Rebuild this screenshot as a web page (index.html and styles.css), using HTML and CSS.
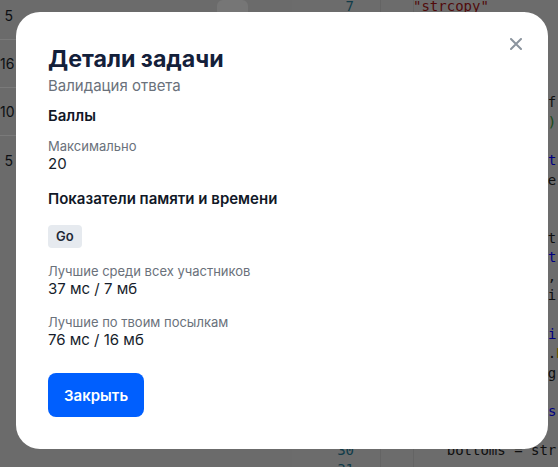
FILE: index.html
```html
<!DOCTYPE html>
<html lang="ru">
<head>
<meta charset="utf-8">
<title>Детали задачи</title>
<link rel="stylesheet" href="styles.css">
</head>
<body>
<div class="page">
  <div class="table">
    <div class="row"><span class="num">5</span><span class="tool"></span></div>
    <div class="row"><span class="num">16</span></div>
    <div class="row"><span class="num">10</span></div>
    <div class="row last"><span class="num">5</span></div>
  </div>
  <div class="editor">
    <div class="gutter">
      <div class="ln">7</div><div class="ln">8</div><div class="ln">9</div><div class="ln">10</div>
      <div class="ln">11</div><div class="ln">12</div><div class="ln">13</div><div class="ln">14</div>
      <div class="ln">15</div><div class="ln">16</div><div class="ln">17</div><div class="ln">18</div>
      <div class="ln">19</div><div class="ln">20</div><div class="ln">21</div><div class="ln">22</div>
      <div class="ln">23</div><div class="ln">24</div><div class="ln">25</div><div class="ln">26</div>
      <div class="ln">27</div><div class="ln">28</div><div class="ln">29</div><div class="ln">30</div>
      <div class="ln">31</div>
    </div>
    <div class="fold"></div>
    <pre class="code"><div class="cl"><span class="s">"strcopy"</span></div><div class="cl">}</div><div class="cl"> </div><div class="cl"><span class="k">func</span> main() {</div><div class="cl">    <span class="k">var</span> n <span class="k">int</span></div><div class="cl">    res := bufi.f</div><div class="cl">    fmt.Fscan(&amp;n<span class="g">)</span></div><div class="cl"> </div><div class="cl">    <span class="k">var</span> tops    <span class="k">t</span></div><div class="cl">    w := bufio.Ne</div><div class="cl"> </div><div class="cl"> </div><div class="cl">    tops = make(t</div><div class="cl">    <span class="k">for</span> i := 0; <span class="k">t</span></div><div class="cl">        x, yy, z,</div><div class="cl">        n = n + i</div><div class="cl">    }</div><div class="cl">    <span class="k">for</span> j := 0; <span class="k">i</span></div><div class="cl">        line := .<span class="f">R</span></div><div class="cl">        tops = ag</div><div class="cl">    }</div><div class="cl">    <span class="k">var</span> bots []*<span class="k">s</span></div><div class="cl"> </div><div class="cl">    bottoms = str</div><div class="cl"> </div></pre>
  </div>
</div>

<div class="overlay"></div>

<div class="modal">
  <button class="close" aria-label="Закрыть">
    <svg width="12" height="12" viewBox="0 0 12 12"><path d="M1 1L11 11M11 1L1 11" stroke="#8b949e" stroke-width="2" stroke-linecap="round"/></svg>
  </button>
  <h1 class="title">Детали задачи</h1>
  <div class="subtitle">Валидация ответа</div>

  <h2 class="section">Баллы</h2>
  <div class="label">Максимально</div>
  <div class="value">20</div>

  <h2 class="section section-2">Показатели памяти и времени</h2>
  <span class="badge">Go</span>

  <div class="label label-gap">Лучшие среди всех участников</div>
  <div class="value">37 мс / 7 мб</div>
  <div class="label label-gap2">Лучшие по твоим посылкам</div>
  <div class="value">76 мс / 16 мб</div>

  <button class="primary">Закрыть</button>
</div>
</body>
</html>
```

FILE: styles.css
```css
* { box-sizing: border-box; }

html, body {
  margin: 0;
  padding: 0;
  height: 100%;
  overflow: hidden;
}

body {
  background: #d6d6d6;
  font-family: Inter, "Noto Sans", sans-serif;
}

.page {
  display: flex;
  height: 100%;
}

.table {
  width: 292px;
  margin-top: -8px;
  flex: none;
}

.row {
  height: 48px;
  border-bottom: 1px solid #f4f4f4;
  display: flex;
  align-items: center;
}
.row.last { border-bottom: none; }

.num {
  width: 13px;
  text-align: right;
  font-family: Inter, sans-serif;
  font-size: 14px;
  color: #1a1f29;
}

.tool {
  margin-left: 204px;
  width: 31px;
  height: 32px;
  border-radius: 6px;
  background: #ececec;
  align-self: flex-start;
  margin-top: 8px;
}

.editor {
  display: flex;
  flex: 1;
  min-width: 0;
  background: #d9d9d9;
  overflow: hidden;
}

.gutter {
  width: 88px;
  flex: none;
  padding-right: 26px;
  margin-top: -3px;
  font-family: "DejaVu Sans Mono", monospace;
  font-size: 14px;
  color: #237893;
  text-align: right;
  line-height: 19.3px;
}

.fold {
  width: 34px;
  flex: none;
  border-left: 1px solid #c8c8c8;
  border-right: 1px solid #c8c8c8;
}

.code {
  margin: -3px 0 0 -1px;
  font-family: "DejaVu Sans Mono", monospace;
  font-size: 14px;
  line-height: 19.3px;
  color: #1e1e1e;
  white-space: pre;
}
.cl { height: 19.3px; }
.code .s { color: #a31515; }
.code .k { color: #0000ff; }
.code .g { color: #319331; }
.code .f { color: #c9a400; }

.overlay {
  position: fixed;
  inset: 0;
  background: rgba(0, 0, 0, 0.5);
}

.modal {
  position: absolute;
  left: 16px;
  top: 12px;
  width: 532px;
  height: 437px;
  background: #fff;
  border-radius: 24px;
  padding: 33px 32px 31px;
  color: #151d2b;
}

.close {
  position: absolute;
  top: 26px;
  right: 26px;
  width: 12px;
  height: 12px;
  padding: 0;
  border: none;
  background: none;
  display: flex;
}

.title {
  margin: 0;
  font-size: 23.2px;
  line-height: 28px;
  font-weight: 700;
  color: #13203a;
}

.subtitle {
  margin-top: 3px;
  font-size: 15px;
  line-height: 20px;
  color: #6a717b;
}

.section {
  margin: 10px 0 0;
  font-size: 15px;
  line-height: 20px;
  font-weight: 600;
  color: #111827;
}

.section-2 { margin-top: 16px; }

.label {
  margin-top: 12px;
  font-size: 13px;
  line-height: 16px;
  color: #6a717b;
}
.label-gap { margin-top: 15px; }
.label-gap2 { margin-top: 16px; }

.value {
  padding-top: 1px;
  font-size: 15px;
  line-height: 18px;
  color: #151d2b;
}

.badge {
  display: inline-block;
  margin-top: 16px;
  padding: 3px 8px;
  font-size: 13px;
  line-height: 17px;
  font-weight: 600;
  color: #1f2937;
  background: #e6eaef;
  border-radius: 4px;
  vertical-align: top;
}

.primary {
  display: block;
  margin-top: 24px;
  height: 44px;
  padding: 0 16px;
  border: none;
  border-radius: 8px;
  background: #005ffe;
  color: #fff;
  font-family: Inter, sans-serif;
  font-size: 15px;
  font-weight: 600;
}
```
